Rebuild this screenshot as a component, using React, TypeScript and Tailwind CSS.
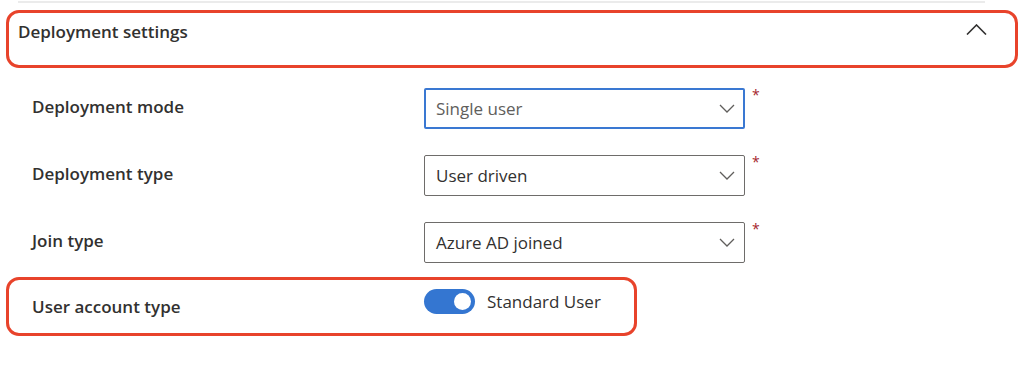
const FONT = "font-['Open_Sans',_'Noto_Sans',_sans-serif]";

function ChevronDown() {
  return (
    <svg width="16" height="9" viewBox="0 0 16 9" fill="none" className="shrink-0">
      <path d="M1 1l7 7 7-7" stroke="#605e5c" strokeWidth="1.3" />
    </svg>
  );
}

function ChevronUp() {
  return (
    <svg width="21" height="11" viewBox="0 0 21 11" fill="none">
      <path d="M1 10.5l9.5-9.5 9.5 9.5" stroke="#323130" strokeWidth="1.6" />
    </svg>
  );
}

interface DropdownRowProps {
  label: string;
  value: string;
  focused?: boolean;
}

function DropdownRow({ label, value, focused = false }: DropdownRowProps) {
  return (
    <div className="flex h-[41px] items-center">
      <div className="w-[392px] pb-[4px] text-[17px] font-semibold text-[#323130]">{label}</div>
      <div
        className={
          focused
            ? "flex h-[41px] w-[321px] items-center justify-between rounded-[2px] border-2 border-[#3a78d2] pl-[10px] pr-[8px]"
            : "flex h-[41px] w-[321px] items-center justify-between rounded-[2px] border border-[#6e6c6a] pl-[11px] pr-[9px]"
        }
      >
        <span className={focused ? "text-[17px] text-[#605e5c]" : "text-[17px] text-[#323130]"}>{value}</span>
        <ChevronDown />
      </div>
      <span className="ml-[7px] self-start text-[14px] leading-[14px] text-[#a4262c]">*</span>
    </div>
  );
}

export default function App() {
  return (
    <div className={`${FONT} h-[368px] w-[1024px] bg-white`}>
      <div className="ml-[18px] mt-[1px] h-[2px] w-[967px] bg-[#ebebeb]" />
      <div className="mx-[6px] mt-[7px] flex h-[58px] items-start justify-between rounded-[13px] border-[3px] border-[#e8432b] pl-[9px] pr-[28px] pt-[6px]">
        <h2 className="text-[17px] font-semibold text-[#323130]">Deployment settings</h2>
        <div className="pt-[5px]">
          <ChevronUp />
        </div>
      </div>

      <div className="ml-[32px] mt-[20px] flex flex-col gap-[26px]">
        <DropdownRow label="Deployment mode" value="Single user" focused />
        <DropdownRow label="Deployment type" value="User driven" />
        <DropdownRow label="Join type" value="Azure AD joined" />
      </div>

      <div className="mx-[6px] mt-[14px] flex h-[59px] w-[631px] items-start rounded-[13px] border-[3px] border-[#e8432b] pl-[23px] pt-[9px]">
        <div className="w-[392px] pt-[5px] text-[17px] font-semibold text-[#323130]">User account type</div>
        <div className="flex items-center gap-[12px]">
          <div className="flex h-[25px] w-[51px] items-center justify-end rounded-full bg-[#3476d1] pr-[4px]">
            <div className="h-[17px] w-[17px] rounded-full bg-white" />
          </div>
          <span className="text-[17px] text-[#323130]">Standard User</span>
        </div>
      </div>
    </div>
  );
}
